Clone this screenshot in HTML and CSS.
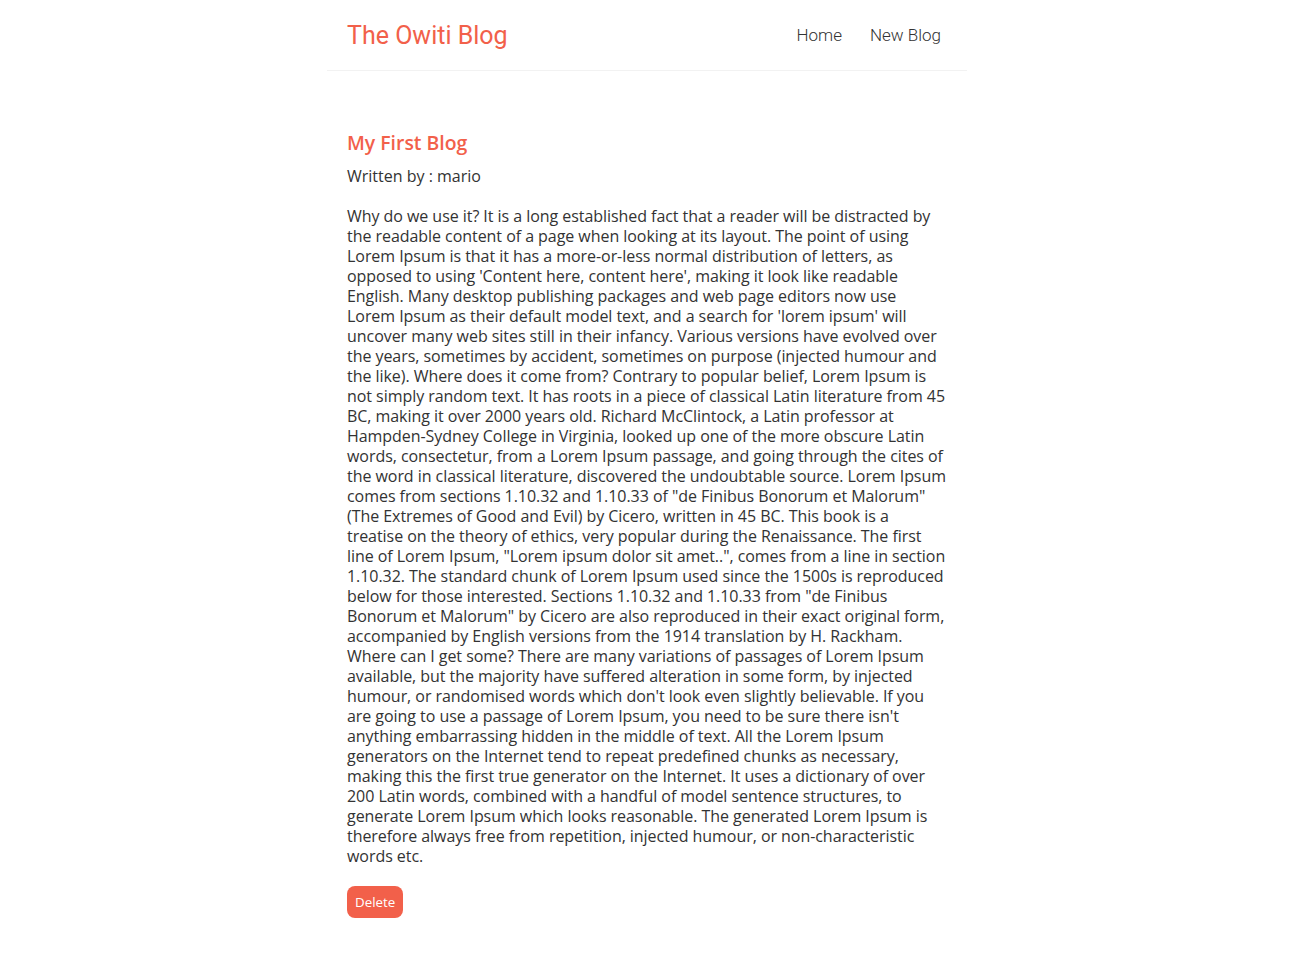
FILE: index.html
```
<!DOCTYPE html>
<html lang="en">
<head>
<meta charset="utf-8">
<title>The Owiti Blog</title>
<link rel="stylesheet" href="styles.css">
</head>
<body>
<div class="app">
  <nav class="navbar">
    <h1 class="brand">The Owiti Blog</h1>
    <div class="links">
      <a class="nav-link" href="#">Home</a>
      <a class="nav-link" href="#">New Blog</a>
    </div>
  </nav>
  <div class="content">
    <article class="blog-details">
      <h2 class="blog-title">My First Blog</h2>
      <p class="author">Written by : mario</p>
      <div class="blog-body">Why do we use it? It is a long established fact that a reader will be distracted by the readable content of a page when looking at its layout. The point of using Lorem Ipsum is that it has a more-or-less normal distribution of letters, as opposed to using 'Content here, content here', making it look like readable English. Many desktop publishing packages and web page editors now use Lorem Ipsum as their default model text, and a search for 'lorem ipsum' will uncover many web sites still in their infancy. Various versions have evolved over the years, sometimes by accident, sometimes on purpose (injected humour and the like). Where does it come from? Contrary to popular belief, Lorem Ipsum is not simply random text. It has roots in a piece of classical Latin literature from 45 BC, making it over 2000 years old. Richard McClintock, a Latin professor at Hampden-Sydney College in Virginia, looked up one of the more obscure Latin words, consectetur, from a Lorem Ipsum passage, and going through the cites of the word in classical literature, discovered the undoubtable source. Lorem Ipsum comes from sections 1.10.32 and 1.10.33 of "de Finibus Bonorum et Malorum" (The Extremes of Good and Evil) by Cicero, written in 45 BC. This book is a treatise on the theory of ethics, very popular during the Renaissance. The first line of Lorem Ipsum, "Lorem ipsum dolor sit amet..", comes from a line in section 1.10.32. The standard chunk of Lorem Ipsum used since the 1500s is reproduced below for those interested. Sections 1.10.32 and 1.10.33 from "de Finibus Bonorum et Malorum" by Cicero are also reproduced in their exact original form, accompanied by English versions from the 1914 translation by H. Rackham. Where can I get some? There are many variations of passages of Lorem Ipsum available, but the majority have suffered alteration in some form, by injected humour, or randomised words which don't look even slightly believable. If you are going to use a passage of Lorem Ipsum, you need to be sure there isn't anything embarrassing hidden in the middle of text. All the Lorem Ipsum generators on the Internet tend to repeat predefined chunks as necessary, making this the first true generator on the Internet. It uses a dictionary of over 200 Latin words, combined with a handful of model sentence structures, to generate Lorem Ipsum which looks reasonable. The generated Lorem Ipsum is therefore always free from repetition, injected humour, or non-characteristic words etc.</div>
      <button class="delete-btn" type="button">Delete</button>
    </article>
  </div>
</div>
</body>
</html>
```

FILE: styles.css
```
* {
  margin: 0;
  box-sizing: border-box;
}

body {
  margin: 0;
  background: #ffffff;
  color: #333333;
  font-family: "Open Sans", "Liberation Sans", Arial, sans-serif;
}

.navbar {
  display: flex;
  align-items: center;
  max-width: 640px;
  margin: 0 auto;
  padding: 20px;
  border-bottom: 1px solid #f2f2f2;
  height: 71px;
}

.brand {
  font-family: Roboto, "Liberation Sans", sans-serif;
  font-weight: 400;
  font-size: 25px;
  line-height: 32px;
  padding-top: 2px;
  color: #f2604a;
}

.links {
  margin-left: auto;
  display: flex;
}

.nav-link {
  font-family: Roboto, "Liberation Sans", sans-serif;
  font-weight: 300;
  font-size: 17px;
  line-height: 24px;
  color: #333333;
  text-decoration: none;
  margin-left: 16px;
  padding: 6px;
}

.content {
  max-width: 640px;
  margin: 40px auto;
  padding: 19px 20px 20px;
}

.blog-title {
  font-size: 19.4px;
  line-height: 25px;
  font-weight: 600;
  color: #f2604a;
  margin-bottom: 11px;
}

.author {
  font-size: 16px;
  line-height: 20px;
  color: #333333;
}

.blog-body {
  margin: 20px 0;
  font-size: 16px;
  line-height: 20px;
  letter-spacing: -0.05px;
  color: #333333;
}

.delete-btn {
  background: #f2604a;
  color: #ffffff;
  border: 0;
  border-radius: 8px;
  padding: 8px;
  font-family: "Open Sans", "Liberation Sans", Arial, sans-serif;
  font-size: 13.33px;
  line-height: 16px;
  cursor: pointer;
}
```
